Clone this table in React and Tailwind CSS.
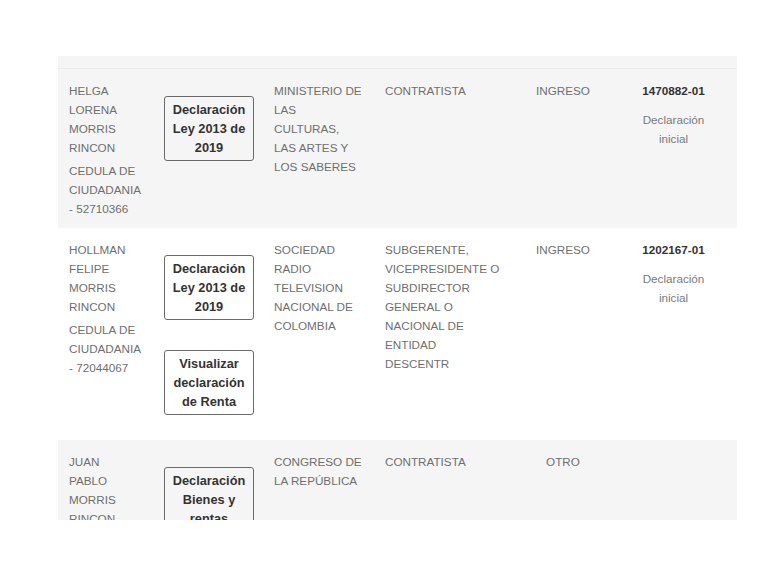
import React from "react";

const Lines = ({ lines, className = "" }) => (
  <div className={className}>
    {lines.map((l, i) => (
      <div key={i} className="whitespace-nowrap">{l}</div>
    ))}
  </div>
);

const Btn = ({ lines }) => (
  <div className="w-[90px] border border-[#6a6a6a] rounded-[3px] py-[3px] text-center font-bold text-[12.8px] leading-[19px] text-[#333]">
    {lines.map((l, i) => (
      <div key={i} className="whitespace-nowrap">{l}</div>
    ))}
  </div>
);

const Row = ({ bg, name, id, buttons, entity, role, type, number, numberSub }) => (
  <div
    className={
      "grid grid-cols-[97px_109px_110px_142px_94px_127px] pt-[12px] pb-[10px] " +
      bg
    }
  >
    <div className="pl-[11px]">
      <Lines lines={name} />
      {id && <Lines lines={id} className="mt-[4px]" />}
    </div>
    <div className="pl-[9px] flex flex-col gap-[30px] py-[15px]">
      {buttons.map((b, i) => (
        <Btn key={i} lines={b} />
      ))}
    </div>
    <div className="pl-[10px]">
      <Lines lines={entity} />
    </div>
    <div className="pl-[11px]">
      <Lines lines={role} />
    </div>
    <div className="text-center">{type}</div>
    <div className="text-center">
      {number && <div className="font-bold text-[#333]">{number}</div>}
      {numberSub && <Lines lines={numberSub} className="mt-[10px] text-[#7a7a7a]" />}
    </div>
  </div>
);

export default function App() {
  return (
    <div
      className="w-[780px] h-[565px] bg-white overflow-hidden"
      style={{ fontFamily: '"Liberation Sans", Arial, sans-serif' }}
    >
      <div className="ml-[58px] mt-[56px] w-[679px] h-[464px] overflow-hidden text-[11.7px] leading-[19px] text-[#6f6f6f]">
        <div className="h-[13px] bg-[#f5f5f5] border-b border-[#ebebeb]" />
        <Row
          bg="bg-[#f5f5f5]"
          name={["HELGA", "LORENA", "MORRIS", "RINCON"]}
          id={["CEDULA DE", "CIUDADANIA", "- 52710366"]}
          buttons={[["Declaración", "Ley 2013 de", "2019"]]}
          entity={["MINISTERIO DE", "LAS", "CULTURAS,", "LAS ARTES Y", "LOS SABERES"]}
          role={["CONTRATISTA"]}
          type="INGRESO"
          number="1470882-01"
          numberSub={["Declaración", "inicial"]}
        />
        <Row
          bg="bg-white"
          name={["HOLLMAN", "FELIPE", "MORRIS", "RINCON"]}
          id={["CEDULA DE", "CIUDADANIA", "- 72044067"]}
          buttons={[
            ["Declaración", "Ley 2013 de", "2019"],
            ["Visualizar", "declaración", "de Renta"],
          ]}
          entity={["SOCIEDAD", "RADIO", "TELEVISION", "NACIONAL DE", "COLOMBIA"]}
          role={[
            "SUBGERENTE,",
            "VICEPRESIDENTE O",
            "SUBDIRECTOR",
            "GENERAL O",
            "NACIONAL DE",
            "ENTIDAD",
            "DESCENTR",
          ]}
          type="INGRESO"
          number="1202167-01"
          numberSub={["Declaración", "inicial"]}
        />
        <Row
          bg="bg-[#f5f5f5]"
          name={["JUAN", "PABLO", "MORRIS", "RINCON"]}
          buttons={[["Declaración", "Bienes y", "rentas"]]}
          entity={["CONGRESO DE", "LA REPÚBLICA"]}
          role={["CONTRATISTA"]}
          type="OTRO"
        />
      </div>
    </div>
  );
}
